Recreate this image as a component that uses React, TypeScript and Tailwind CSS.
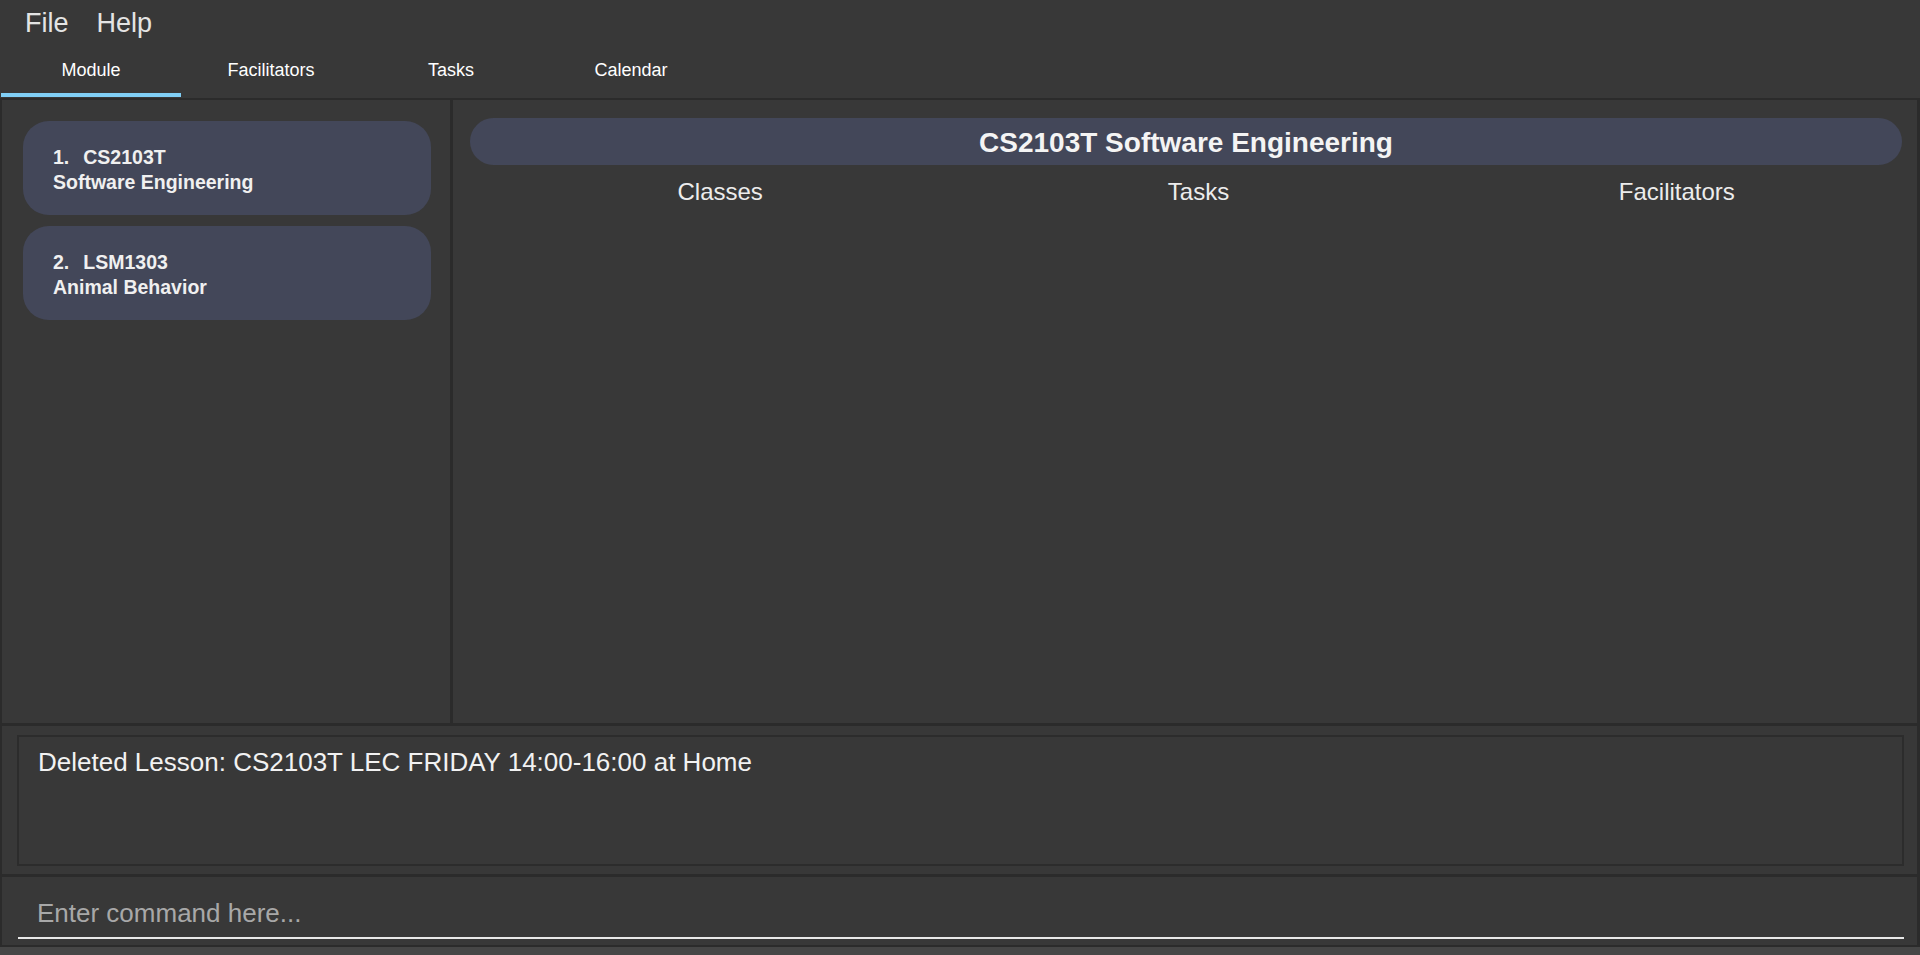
import { useState } from 'react';

const modules = [
  { code: 'CS2103T', name: 'Software Engineering' },
  { code: 'LSM1303', name: 'Animal Behavior' },
];

const tabs = ['Module', 'Facilitators', 'Tasks', 'Calendar'];

function ModuleCard({ index, code, name }: { index: number; code: string; name: string }) {
  return (
    <div className="h-[94px] rounded-[26px] bg-[#434759] pl-[30px] pt-[24px] text-[19.5px] font-bold leading-[25px] text-[#f0f0f0]">
      <div>
        <span className="mr-[14px]">{index}.</span>
        {code}
      </div>
      <div>{name}</div>
    </div>
  );
}

export default function App() {
  const [active, setActive] = useState(0);
  const [command, setCommand] = useState('');

  return (
    <div
      className="flex h-[955px] w-[1920px] flex-col overflow-hidden bg-[#383838]"
      style={{ fontFamily: '"Liberation Sans", Arial, sans-serif' }}
    >
      {/* menu bar */}
      <div className="flex h-[42px] gap-[28px] pl-[25px] pt-[10px] text-[27px] leading-[27px] text-[#e4e4e4]">
        <span>File</span>
        <span>Help</span>
      </div>

      {/* tabs */}
      <div className="flex h-[56px] pl-[1px]">
        {tabs.map((t, i) => (
          <button
            key={t}
            onClick={() => setActive(i)}
            className="flex w-[180px] flex-col justify-between"
          >
            <span className="pt-[19px] text-center text-[18px] leading-[18px] text-white">{t}</span>
            <span className={`mb-[1px] h-[4px] w-full ${i === active ? 'bg-[#80cff6]' : ''}`} />
          </button>
        ))}
      </div>

      {/* body */}
      <div className="flex flex-col border-b-2 border-l-2 border-r-[3px] border-t-2 border-[#2b2b2b]">
        <div className="flex h-[623px]">
          <div className="flex w-[448px] flex-col gap-[11px] pl-[21px] pr-[19px] pt-[21px]">
            {modules.map((m, i) => (
              <ModuleCard key={m.code} index={i + 1} code={m.code} name={m.name} />
            ))}
          </div>
          <div className="w-[3px] bg-[#2b2b2b]" />
          <div className="flex flex-1 flex-col">
            <div className="ml-[17px] mr-[15px] mt-[18px] flex h-[47px] items-center justify-center rounded-full bg-[#434759] pt-[2px] text-[28px] font-bold leading-[28px] text-[#f4f4f4]">
              CS2103T Software Engineering
            </div>
            <div className="ml-[28px] mr-[1px] mt-[13px] grid grid-cols-3 text-center text-[24px] leading-[28px] text-[#ececec]">
              <span>Classes</span>
              <span>Tasks</span>
              <span>Facilitators</span>
            </div>
          </div>
        </div>

        <div className="h-[3px] bg-[#2b2b2b]" />

        {/* result display */}
        <div className="h-[148px] pb-[8px] pl-[15px] pr-[13px] pt-[9px]">
          <div className="h-full border-2 border-[#2c2c2c] pl-[19px] pt-[10px] text-[26px] leading-[30px] text-[#f2f2f2]">
            Deleted Lesson: CS2103T LEC FRIDAY 14:00-16:00 at Home
          </div>
        </div>

        <div className="h-[3px] bg-[#2b2b2b]" />

        {/* command box */}
        <div className="h-[68px] pl-[16px] pr-[13px] pt-[21px]">
          <div className="border-b-2 border-[#e8e8e8] pb-[8px]">
            <input
              value={command}
              onChange={(e) => setCommand(e.target.value)}
              placeholder="Enter command here..."
              className="h-[30px] w-full bg-transparent pl-[19px] text-[26px] leading-[30px] text-white outline-none placeholder:text-[#a8a8a8]"
            />
          </div>
        </div>
      </div>

      <div className="flex-1 bg-[#464646]" />
    </div>
  );
}
